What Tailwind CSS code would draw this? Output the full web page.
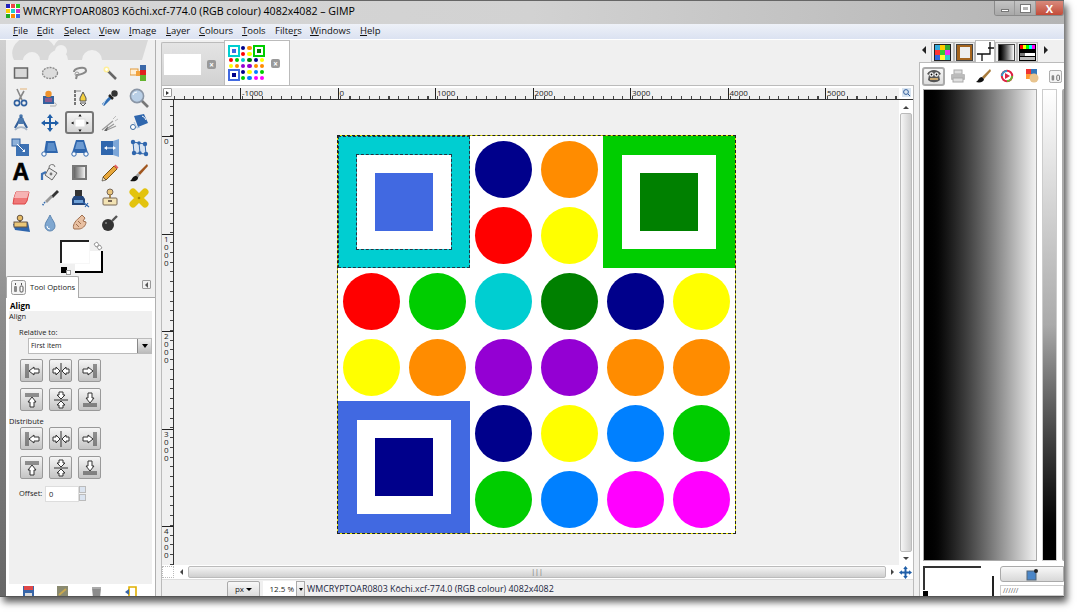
<!DOCTYPE html>
<html>
<head>
<meta charset="utf-8">
<title>GIMP</title>
<script src="https://cdn.jsdelivr.net/npm/@tailwindcss/browser@4"></script>
</head>
<body class="bg-white">
<div class="w-[1080px] h-[615px] overflow-hidden bg-white font-['Open_Sans','Noto_Sans',sans-serif] text-[#222]">
<div class="w-[1064px] h-[597px] flex flex-col overflow-hidden border-b border-[#555] shadow-[3px_5px_7px_rgba(0,0,0,0.65)]">

  <!-- title bar -->
  <div class="h-[24px] flex items-start shrink-0 border-t border-[#666] bg-linear-to-r from-[#d6d6d6] via-[#d2d2d2] to-[#b4b4b4]">
    <svg class="w-[14px] h-[14px] ml-[6px] mt-[3px] shrink-0" viewBox="0 0 14 14"><rect width="14" height="14" fill="#fff"/><rect width="4" height="4" fill="#22b"/><rect x="5" width="4" height="4" fill="#e44"/><rect x="10" width="4" height="4" fill="#2c2"/><rect y="5" width="4" height="4" fill="#fc0"/><rect x="5" y="5" width="4" height="4" fill="#2cc"/><rect x="10" y="5" width="4" height="4" fill="#c3c"/><rect y="10" width="4" height="4" fill="#2a2"/><rect x="5" y="10" width="4" height="4" fill="#f80"/><rect x="10" y="10" width="4" height="4" fill="#36e"/></svg>
    <span class="ml-[3px] mt-[2px] text-[10.6px] leading-[16px] text-black whitespace-nowrap">WMCRYPTOAR0803 Kōchi.xcf-774.0 (RGB colour) 4082x4082 – GIMP</span>
    <div class="ml-auto flex h-[15px] border border-t-0 border-[#8a8a8a] rounded-b-[3px] overflow-hidden">
      <div class="w-[20px] border-r border-[#999] bg-linear-to-b from-[#c4c4c4] to-[#a8a8a8] flex items-center justify-center"><span class="block w-[8px] h-[3px] mt-[4px] bg-white border border-[#777]"></span></div>
      <div class="w-[21px] border-r border-[#999] bg-linear-to-b from-[#c4c4c4] to-[#a8a8a8] flex items-center justify-center"><span class="block w-[9px] h-[7px] border-2 border-white outline outline-[#777]"></span></div>
      <div class="w-[27px] bg-linear-to-b from-[#d88a7c] to-[#c24a38] flex items-center justify-center text-white font-bold text-[11px] leading-none">X</div>
    </div>
  </div>

  <!-- menu bar -->
  <div class="h-[16px] shrink-0 flex items-center pl-[13px] bg-linear-to-b from-[#eef1f8] to-[#dbe2f1] text-[9.5px] text-[#111] border-b border-white">
    <span class="w-[24px]"><u>F</u>ile</span>
    <span class="w-[27px]"><u>E</u>dit</span>
    <span class="w-[35px]"><u>S</u>elect</span>
    <span class="w-[30px]"><u>V</u>iew</span>
    <span class="w-[37px]"><u>I</u>mage</span>
    <span class="w-[33px]"><u>L</u>ayer</span>
    <span class="w-[43px]"><u>C</u>olours</span>
    <span class="w-[33px]"><u>T</u>ools</span>
    <span class="w-[35px]">Filte<u>r</u>s</span>
    <span class="w-[50px]"><u>W</u>indows</span>
    <span><u>H</u>elp</span>
  </div>

  <div class="flex flex-1 min-h-0 bg-[#f0f0f0]">
    <!-- left frame -->
    <div class="w-[6px] shrink-0 bg-linear-to-b from-[#d0d0d0] via-[#8c8c8c] to-[#666]"></div>

    <!-- toolbox + tool options -->
    <div class="w-[150px] shrink-0 flex flex-col border-r border-[#b0b0b0]">
      <svg class="h-[20px] w-[149px] shrink-0" viewBox="0 0 149 20"><g fill="#d9d9d9"><path d="M8 20a20 16 0 0 1 40 -14a14 12 0 0 1 22 -6h72l-6 20h-40a10 10 0 0 0-20 0h-14a10 10 0 0 0-20 0h-8a8 8 0 0 0-16 0z"/></g><circle cx="55" cy="11" r="6" fill="#f0f0f0"/><circle cx="23" cy="20" r="6" fill="#f0f0f0"/></svg>

      <div class="grid grid-cols-5 auto-rows-[25px] w-[148px] h-[175px] shrink-0 place-items-center">
        <!-- row 1 -->
        <svg class="w-[18px] h-[18px]" viewBox="0 0 18 18"><rect x="2.5" y="4" width="13" height="10" fill="#d8d8d8" stroke="#666" stroke-width="1.5"/></svg>
        <svg class="w-[18px] h-[18px]" viewBox="0 0 18 18"><ellipse cx="9" cy="9" rx="7.5" ry="5.5" fill="#dcdcdc" stroke="#888" stroke-width="1.3" stroke-dasharray="2 1"/></svg>
        <svg class="w-[18px] h-[18px]" viewBox="0 0 18 18"><path d="M3 8c0-4 11-6 12-2 1 3-7 5-9 5l-1 4" fill="none" stroke="#888" stroke-width="2"/><circle cx="6" cy="10" r="2" fill="none" stroke="#999"/></svg>
        <svg class="w-[18px] h-[18px]" viewBox="0 0 18 18"><path d="M7 7l8 8" stroke="#666" stroke-width="2.5"/><circle cx="5.5" cy="5.5" r="3" fill="#ffef99"/><circle cx="5.5" cy="5.5" r="1.4" fill="#fff"/></svg>
        <svg class="w-[18px] h-[18px]" viewBox="0 0 18 18"><rect x="0" y="5" width="8" height="6" fill="#fff0d8" stroke="#e19a3a"/><rect x="10" y="1" width="6" height="5" fill="#3c68a8"/><rect x="10" y="6" width="6" height="5" fill="#e02020"/><rect x="10" y="11" width="6" height="6" fill="#63b32e"/><rect x="6" y="7" width="4" height="5" fill="#f2a23c"/></svg>
        <!-- row 2 -->
        <svg class="w-[20px] h-[20px]" viewBox="0 0 20 20"><path d="M6 1l5 11M13 3l-5 9" stroke="#888" stroke-width="1.6"/><path d="M9 1h7" stroke="#e8c9a0" stroke-width="1.5"/><circle cx="6" cy="15" r="2.6" fill="none" stroke="#2f5f9e" stroke-width="1.6"/><circle cx="13" cy="15" r="2.6" fill="none" stroke="#2f5f9e" stroke-width="1.6"/></svg>
        <svg class="w-[20px] h-[20px]" viewBox="0 0 20 20"><path d="M12 15c5-1 5 3 3 3h-5" fill="none" stroke="#aaa"/><rect x="3" y="8" width="11" height="8" fill="#35619e"/><path d="M5 10h7v4h-7z" fill="#8b5a8f"/><circle cx="8.5" cy="6" r="3.2" fill="#f0932b"/></svg>
        <svg class="w-[20px] h-[20px]" viewBox="0 0 20 20"><path d="M5 2v16" stroke="#777" stroke-width="2" stroke-dasharray="3 1"/><path d="M5 3h6" stroke="#888"/><path d="M13 4l3 6v3h-6v-3z" fill="#f4d03f" stroke="#555"/><path d="M10 15l3 3 3-3z" fill="#fff" stroke="#555"/></svg>
        <svg class="w-[20px] h-[20px]" viewBox="0 0 20 20"><path d="M3 17l8-8" stroke="#2f6eb5" stroke-width="3"/><path d="M3 17l3-6" stroke="#cfe2f5"/><path d="M9 7l4 4" stroke="#222" stroke-width="2.5"/><circle cx="14.5" cy="5.5" r="3.2" fill="#333"/></svg>
        <svg class="w-[22px] h-[22px]" viewBox="0 0 22 22"><path d="M13 13l7 7" stroke="#777" stroke-width="2.6"/><circle cx="9" cy="9" r="6.6" fill="#b9cfe6" stroke="#8a96a6" stroke-width="1.6"/><path d="M5 8a4 4 0 0 1 4-3" stroke="#fff" fill="none"/></svg>
        <!-- row 3 -->
        <svg class="w-[20px] h-[20px]" viewBox="0 0 20 20"><circle cx="10" cy="3" r="1.8" fill="#4a78ad"/><path d="M10 4L4 15M10 4l6 11" stroke="#34609a" stroke-width="2.2"/><path d="M4 17a7 6 0 0 1 12 0" fill="none" stroke="#a8b7c8" stroke-width="1.6"/><rect x="7.5" y="5" width="5" height="6" fill="#4a78ad"/></svg>
        <svg class="w-[20px] h-[20px]" viewBox="0 0 20 20"><path d="M10 1l3 4h-2v4h4V7l4 3-4 3v-2h-4v4h2l-3 4-3-4h2v-4H5v2l-4-3 4-3v2h4V5H7z" fill="#1f5ea8"/></svg>
        <div class="w-[29px] h-[23px] border-2 border-[#777] rounded-[3px] bg-linear-to-b from-[#f4f4f4] to-[#d4d4d4] flex items-center justify-center">
          <svg class="w-[22px] h-[18px]" viewBox="0 0 22 18"><rect x="6" y="5" width="10" height="8" fill="#fff" stroke="#ddd"/><path d="M11 0l1.6 2.6h-3.2zM11 18l1.6-2.6h-3.2zM2 9l2.6-1.6v3.2zM20 9l-2.6-1.6v3.2z" fill="#111"/></svg>
        </div>
        <svg class="w-[20px] h-[20px]" viewBox="0 0 20 20"><path d="M2 17l11-9M5 17l9-6M7 17l9-4" stroke="#999" stroke-width="1.2" fill="none"/><path d="M4 18l4-5-1 5z" fill="#666"/><path d="M13 6l3-3M15 8l3-2" stroke="#bbb"/></svg>
        <svg class="w-[20px] h-[20px]" viewBox="0 0 20 20"><path d="M5 3l10-2 4 9-10 4z" fill="#2f66ad"/><path d="M13 3a6 6 0 0 1 4 4" stroke="#fff" fill="none"/><circle cx="4" cy="14" r="2.5" fill="#fff" stroke="#36689f"/><path d="M5 9l3 6 3-1" stroke="#a8c4e3" fill="none"/></svg>
        <!-- row 4 -->
        <svg class="w-[20px] h-[20px]" viewBox="0 0 20 20"><rect x="5" y="6" width="13" height="12" fill="#3d72b4"/><rect x="1" y="1" width="8" height="7" fill="#8eb1d9" stroke="#2f5f9e"/><path d="M6 6l8 8" stroke="#fff"/><path d="M14 14l-3 0 3-3z" fill="#fff"/></svg>
        <svg class="w-[20px] h-[20px]" viewBox="0 0 20 20"><path d="M6 3h9l3 12H4z" fill="#2f66ad"/><path d="M8 5h6l2 8H7z" fill="#5d8fca"/><circle cx="4" cy="16" r="2.2" fill="#fff" stroke="#2f66ad"/></svg>
        <svg class="w-[20px] h-[20px]" viewBox="0 0 20 20"><path d="M6 2h8l4 13H2z" fill="#2f66ad"/><path d="M7 4h6l2 7H5z" fill="#6d9bd2"/><circle cx="4" cy="16" r="2.2" fill="#fff" stroke="#2f66ad"/><circle cx="16" cy="16" r="2.2" fill="#fff" stroke="#2f66ad"/></svg>
        <svg class="w-[20px] h-[20px]" viewBox="0 0 20 20"><path d="M1 3h12v14H1z" fill="#2f66ad"/><path d="M13 3l6-2v18l-6-2z" fill="#7ca6d8"/><path d="M4 10l3-2v4zM16 10l-3-2v4z" fill="#fff"/><path d="M7 10h6" stroke="#fff"/></svg>
        <svg class="w-[20px] h-[20px]" viewBox="0 0 20 20"><path d="M4 4l12 2 1 10-12-1z" fill="#d7e3f1" stroke="#2f66ad"/><path d="M10 5l1 10" stroke="#2f66ad"/><g fill="#2f66ad"><circle cx="4" cy="4" r="2.2"/><circle cx="16" cy="6" r="2.2"/><circle cx="17" cy="16" r="2.2"/><circle cx="5" cy="15" r="2.2"/><circle cx="10" cy="5" r="1.8"/><circle cx="11" cy="15" r="1.8"/></g></svg>
        <!-- row 5 -->
        <div class="text-[23px] leading-none font-bold text-black font-['Liberation_Sans',sans-serif] [-webkit-text-stroke:0.6px_black]">A</div>
        <svg class="w-[20px] h-[20px]" viewBox="0 0 20 20"><path d="M9 5l8 5-5 7-7-5z" fill="#e8e8e8" stroke="#666"/><path d="M9 5a3 3 0 0 1 6-1" fill="none" stroke="#777"/><path d="M6 9L2 11v6" fill="none" stroke="#3e72b4" stroke-width="2.2"/><circle cx="11" cy="11" r="1.4" fill="#777"/></svg>
        <div class="w-[15px] h-[15px] border-2 border-[#777] bg-linear-to-r from-[#666] to-[#f4f4f4]"></div>
        <svg class="w-[20px] h-[20px]" viewBox="0 0 20 20"><path d="M3 14L14 3l3 3L6 17z" fill="#e8a73b" stroke="#7a5412"/><path d="M14 3l1.5-1.5 3 3L17 6z" fill="#e26060"/><path d="M3 14l-1 4 4-1z" fill="#f5dcae" stroke="#333" stroke-width=".6"/></svg>
        <svg class="w-[20px] h-[20px]" viewBox="0 0 20 20"><path d="M18 1L9 10l2 2 8-9z" fill="#a0561f"/><path d="M9 10l2 2-2 3-3-2z" fill="#999"/><path d="M6 13c3 0 4 2 2 4s-5 1-7 1c2-1 2-4 5-5z" fill="#111"/></svg>
        <!-- row 6 -->
        <svg class="w-[20px] h-[20px]" viewBox="0 0 20 20"><path d="M5 4h13l-2 9-2 3H2l1-6z" fill="#ef7777" stroke="#d44"/><path d="M5 4l-2 6h13l2-6z" fill="#f6b3b3"/></svg>
        <svg class="w-[20px] h-[20px]" viewBox="0 0 20 20"><path d="M17 2l-6 6 2 2 6-6z" fill="#333"/><path d="M5 13l6-6 2 2-6 6z" fill="#999"/><path d="M5 14l-3 4" stroke="#3a70b0" stroke-width="1.6" stroke-dasharray="1.5 1"/></svg>
        <svg class="w-[20px] h-[20px]" viewBox="0 0 20 20"><path d="M4 8h9l2 3v6H2v-6z" fill="#23467c"/><rect x="5" y="2" width="7" height="6" fill="#333"/><path d="M4 12h9v3H4z" fill="#6ea0d6"/><path d="M13 14l6 5M15 19l3-4" stroke="#2f66ad" stroke-width="1.2"/></svg>
        <svg class="w-[20px] h-[20px]" viewBox="0 0 20 20"><circle cx="10" cy="4" r="3" fill="#e9c57c" stroke="#765"/><path d="M9 7h2v3H9z" fill="#aa8a4a"/><rect x="3" y="10" width="14" height="7" rx="1" fill="#f3e3b4" stroke="#765"/><rect x="8" y="12" width="4" height="2" fill="#765"/></svg>
        <svg class="w-[20px] h-[20px]" viewBox="0 0 20 20"><path d="M4 4l12 12M16 4L4 16" stroke="#e3c30e" stroke-width="7" stroke-linecap="round"/><circle cx="10" cy="10" r="1.3" fill="#a88c00"/></svg>
        <!-- row 7 -->
        <svg class="w-[20px] h-[20px]" viewBox="0 0 20 20"><path d="M2 11l15-2 2 10-15-2z" fill="#2f66ad"/><rect x="3" y="9" width="13" height="5" fill="#eac779" stroke="#654"/><circle cx="9" cy="5" r="2.8" fill="#e6bb65" stroke="#654"/><path d="M8 7h2v2H8z" fill="#654"/></svg>
        <svg class="w-[18px] h-[18px]" viewBox="0 0 18 18"><path d="M9 1c2 5 5 7 5 11a5 5 0 0 1-10 0c0-4 3-6 5-11z" fill="#7fa7d0" stroke="#5f87b2"/><path d="M6 12a3 3 0 0 0 3 3" stroke="#fff" fill="none"/></svg>
        <svg class="w-[20px] h-[20px]" viewBox="0 0 20 20"><path d="M4 16c-2-3 1-8 5-11l3-3 3 3-2 3 3 1c0 4-4 7-7 7z" fill="#e8c0a2" stroke="#a07050"/><path d="M8 8l3 3M6 11l3 3" stroke="#a07050"/></svg>
        <svg class="w-[20px] h-[20px]" viewBox="0 0 20 20"><circle cx="8" cy="12" r="6" fill="#333"/><path d="M12 8l5-5" stroke="#555" stroke-width="2.4"/><circle cx="6" cy="10" r="1" fill="#888"/></svg>
        <span></span>
      </div>

      <!-- fg / bg colours -->
      <div class="h-[40px] pt-[5px] pl-[54px] shrink-0">
        <div class="relative w-[43px] h-[33px] bg-[#f0f0f0]">
          <div class="absolute right-0 bottom-0 w-[28px] h-[22px] bg-white border-r-2 border-b-2 border-black"></div>
          <div class="absolute left-0 top-0 w-[29px] h-[23px] bg-white border-t-2 border-l-2 border-[#222] shadow-[1px_1px_0_#f7f7f7]"></div>
          <div class="absolute left-[1px] bottom-0 w-[6px] h-[6px] bg-black"></div>
          <div class="absolute left-[6px] bottom-[-2px] w-[5px] h-[5px] bg-white border border-[#999]"></div>
          <svg class="absolute right-0 top-0 w-[11px] h-[11px]" viewBox="0 0 11 11"><path d="M2 4l3-2 2 3-3 2zM5 7l3-2 2 3-3 2z" fill="#fff" stroke="#999"/></svg>
        </div>
      </div>

      <!-- tool options tab -->
      <div class="h-[22px] shrink-0 flex items-end">
        <div class="w-[73px] h-[22px] bg-white border border-b-0 border-[#aaa] flex items-center pl-[4px] gap-[4px] rounded-t-[2px] -mb-px relative z-10">
          <svg class="w-[15px] h-[15px]" viewBox="0 0 15 15"><rect x=".5" y=".5" width="14" height="14" rx="2" fill="#f4f4f4" stroke="#999"/><path d="M4.5 3v2M10.5 3v2" stroke="#555"/><rect x="3" y="6" width="3" height="6" rx="1" fill="#888"/><rect x="9" y="6" width="3" height="6" rx="1" fill="#fff" stroke="#555"/></svg>
          <span class="text-[7.6px] leading-none whitespace-nowrap">Tool Options</span>
        </div>
        <div class="ml-auto mr-[4px] mb-[8px] w-[9px] h-[9px] border border-[#999] rounded-[1px] flex items-center justify-center"><span class="block border-y-[3px] border-r-[3px] border-y-transparent border-r-[#555]"></span></div>
      </div>

      <!-- tool options panel -->
      <div class="flex-1 min-h-0 bg-white border-t border-[#aaa] pt-[3px] pl-[3px] pr-[3px] flex flex-col">
        <div class="text-[8px] leading-[10px] font-bold text-black pl-[1px]">Align</div>
        <div class="flex-1 bg-[#f0f0f0] text-[7.5px] flex flex-col">
          <div class="leading-[10px]">Align</div>
          <div class="leading-[10px] pl-[10px] mt-[6px]">Relative to:</div>
          <div class="ml-[19px] mt-[1px] w-[124px] h-[16px] bg-white border border-[#bbb] flex items-center pl-[2px] justify-between text-[7px]">
            <span>First item</span>
            <span class="w-[14px] h-[14px] border-l border-[#888] bg-linear-to-b from-[#eee] to-[#bbb] flex items-center justify-center"><span class="block border-x-[3px] border-t-[4px] border-x-transparent border-t-black"></span></span>
          </div>
          <div class="grid grid-cols-[23px_23px_23px] gap-x-[6px] gap-y-[6px] ml-[11px] mt-[5px]">
            <button class="h-[23px] rounded-[2px] border border-[#999] bg-linear-to-b from-[#f5f5f5] to-[#c4c4c4] flex items-center justify-center"><svg class="w-[18px] h-[18px]" viewBox="0 0 18 18"><path d="M3 2v14M5 2v14" stroke="#333"/><path d="M6 9l5-4v2h5v4h-5v2z" fill="#fff" stroke="#333"/></svg></button>
            <button class="h-[23px] rounded-[2px] border border-[#999] bg-linear-to-b from-[#f5f5f5] to-[#c4c4c4] flex items-center justify-center"><svg class="w-[18px] h-[18px]" viewBox="0 0 18 18"><path d="M9 1v16" stroke="#333"/><path d="M8 9L4 5v2H1v4h3v2zM10 9l4-4v2h3v4h-3v2z" fill="#fff" stroke="#333"/></svg></button>
            <button class="h-[23px] rounded-[2px] border border-[#999] bg-linear-to-b from-[#f5f5f5] to-[#c4c4c4] flex items-center justify-center"><svg class="w-[18px] h-[18px]" viewBox="0 0 18 18"><path d="M15 2v14M13 2v14" stroke="#333"/><path d="M12 9L7 5v2H2v4h5v2z" fill="#fff" stroke="#333"/></svg></button>
            <button class="h-[23px] rounded-[2px] border border-[#999] bg-linear-to-b from-[#f5f5f5] to-[#c4c4c4] flex items-center justify-center"><svg class="w-[18px] h-[18px]" viewBox="0 0 18 18"><path d="M2 3h14M2 5h14" stroke="#333"/><path d="M9 6l4 5h-2v5H7v-5H5z" fill="#fff" stroke="#333"/></svg></button>
            <button class="h-[23px] rounded-[2px] border border-[#999] bg-linear-to-b from-[#f5f5f5] to-[#c4c4c4] flex items-center justify-center"><svg class="w-[18px] h-[18px]" viewBox="0 0 18 18"><path d="M2 9h14" stroke="#333"/><path d="M9 8L5 4h2V1h4v3h2zM9 10l-4 4h2v3h4v-3h2z" fill="#fff" stroke="#333"/></svg></button>
            <button class="h-[23px] rounded-[2px] border border-[#999] bg-linear-to-b from-[#f5f5f5] to-[#c4c4c4] flex items-center justify-center"><svg class="w-[18px] h-[18px]" viewBox="0 0 18 18"><path d="M2 15h14M2 13h14" stroke="#333"/><path d="M9 12L5 7h2V2h4v5h2z" fill="#fff" stroke="#333"/></svg></button>
          </div>
          <div class="leading-[10px] mt-[5px]">Distribute</div>
          <div class="grid grid-cols-[23px_23px_23px] gap-x-[6px] gap-y-[6px] ml-[11px] mt-[1px]">
            <button class="h-[23px] rounded-[2px] border border-[#999] bg-linear-to-b from-[#f5f5f5] to-[#c4c4c4] flex items-center justify-center"><svg class="w-[18px] h-[18px]" viewBox="0 0 18 18"><path d="M3 2v14M5 2v14" stroke="#333"/><path d="M6 9l5-4v2h5v4h-5v2z" fill="#fff" stroke="#333"/></svg></button>
            <button class="h-[23px] rounded-[2px] border border-[#999] bg-linear-to-b from-[#f5f5f5] to-[#c4c4c4] flex items-center justify-center"><svg class="w-[18px] h-[18px]" viewBox="0 0 18 18"><path d="M9 1v16" stroke="#333"/><path d="M8 9L4 5v2H1v4h3v2zM10 9l4-4v2h3v4h-3v2z" fill="#fff" stroke="#333"/></svg></button>
            <button class="h-[23px] rounded-[2px] border border-[#999] bg-linear-to-b from-[#f5f5f5] to-[#c4c4c4] flex items-center justify-center"><svg class="w-[18px] h-[18px]" viewBox="0 0 18 18"><path d="M15 2v14M13 2v14" stroke="#333"/><path d="M12 9L7 5v2H2v4h5v2z" fill="#fff" stroke="#333"/></svg></button>
            <button class="h-[23px] rounded-[2px] border border-[#999] bg-linear-to-b from-[#f5f5f5] to-[#c4c4c4] flex items-center justify-center"><svg class="w-[18px] h-[18px]" viewBox="0 0 18 18"><path d="M2 3h14M2 5h14" stroke="#333"/><path d="M9 6l4 5h-2v5H7v-5H5z" fill="#fff" stroke="#333"/></svg></button>
            <button class="h-[23px] rounded-[2px] border border-[#999] bg-linear-to-b from-[#f5f5f5] to-[#c4c4c4] flex items-center justify-center"><svg class="w-[18px] h-[18px]" viewBox="0 0 18 18"><path d="M2 9h14" stroke="#333"/><path d="M9 8L5 4h2V1h4v3h2zM9 10l-4 4h2v3h4v-3h2z" fill="#fff" stroke="#333"/></svg></button>
            <button class="h-[23px] rounded-[2px] border border-[#999] bg-linear-to-b from-[#f5f5f5] to-[#c4c4c4] flex items-center justify-center"><svg class="w-[18px] h-[18px]" viewBox="0 0 18 18"><path d="M2 15h14M2 13h14" stroke="#333"/><path d="M9 12L5 7h2V2h4v5h2z" fill="#fff" stroke="#333"/></svg></button>
          </div>
          <div class="flex items-center mt-[7px] pl-[10px]">
            <span class="w-[26px]">Offset:</span>
            <span class="w-[34px] h-[16px] bg-white border border-[#ddd] pl-[3px] leading-[14px]">0</span>
            <span class="w-[7px] h-[16px] flex flex-col gap-px"><span class="h-[7px] bg-[#dbe4f0] border border-[#bbb]"></span><span class="h-[7px] bg-[#dbe4f0] border border-[#bbb]"></span></span>
          </div>
        </div>
        <div class="h-[12px] shrink-0 flex justify-between px-[14px] pt-[2px] pr-[15px] overflow-hidden">
          <svg class="w-[11px] h-[12px] shrink-0" viewBox="0 0 11 12"><rect width="11" height="12" fill="#3866a8"/><rect x="1" y="0" width="9" height="4" fill="#e04848"/><rect x="2" y="7" width="7" height="5" fill="#ddd"/></svg>
          <svg class="w-[11px] h-[12px] shrink-0" viewBox="0 0 11 12"><rect width="11" height="12" fill="#8a8a70"/><path d="M2 9l7-6" stroke="#c8a850" stroke-width="2"/></svg>
          <svg class="w-[11px] h-[12px] shrink-0" viewBox="0 0 11 12"><path d="M1 2h9l-1 10H2z" fill="#8c8c8c"/><rect x="1" y="1" width="9" height="2" fill="#aaa"/></svg>
          <svg class="w-[12px] h-[12px] shrink-0" viewBox="0 0 12 12"><path d="M4 1h7v11H4z" fill="#fff" stroke="#e0b000" stroke-width="1.6"/><path d="M0 6l4-3v6z" fill="#3866a8"/></svg>
        </div>
      </div>
    </div>

    <!-- image column -->
    <div class="w-[753px] ml-[5px] shrink-0 flex flex-col">
      <!-- tabs -->
      <div class="h-[45px] shrink-0 flex items-end">
        <div class="w-[63px] h-[43px] bg-linear-to-b from-[#e4e4e4] to-[#d2d2d2] border-t border-l border-[#bbb] rounded-tl-[2px] flex items-center pl-[2px] gap-[6px]">
          <div class="w-[37px] h-[21px] bg-white"></div>
          <div class="w-[9px] h-[9px] rounded-[2px] bg-[#999] text-white text-[8px] leading-[9px] text-center font-bold">×</div>
        </div>
        <div class="w-[66px] h-[45px] bg-white border-t border-x border-[#bbb] flex items-center pl-[3px] gap-[6px]">
          <div class="w-[37px] h-[37px] grid grid-cols-6 grid-rows-6 shrink-0">
            <div class="col-span-2 row-span-2 border-[2px] border-[#00ced1] p-[2px]"><div class="h-full bg-[#4169e1]"></div></div>
            <span class="m-px rounded-full bg-[#00008b]"></span><span class="m-px rounded-full bg-[#ff8c00]"></span>
            <div class="col-span-2 row-span-2 border-[2px] border-[#00cd00] p-[2px]"><div class="h-full bg-[#008000]"></div></div>
            <span class="m-px rounded-full bg-[#ff0000]"></span><span class="m-px rounded-full bg-[#ffff00]"></span>
            <span class="m-px rounded-full bg-[#ff0000]"></span><span class="m-px rounded-full bg-[#00cd00]"></span><span class="m-px rounded-full bg-[#00ced1]"></span><span class="m-px rounded-full bg-[#008000]"></span><span class="m-px rounded-full bg-[#00008b]"></span><span class="m-px rounded-full bg-[#ffff00]"></span>
            <span class="m-px rounded-full bg-[#ffff00]"></span><span class="m-px rounded-full bg-[#ff8c00]"></span><span class="m-px rounded-full bg-[#9400d3]"></span><span class="m-px rounded-full bg-[#9400d3]"></span><span class="m-px rounded-full bg-[#ff8c00]"></span><span class="m-px rounded-full bg-[#ff8c00]"></span>
            <div class="col-span-2 row-span-2 border-[2px] border-[#4169e1] p-[2px]"><div class="h-full bg-[#00008b]"></div></div>
            <span class="m-px rounded-full bg-[#00008b]"></span><span class="m-px rounded-full bg-[#ffff00]"></span><span class="m-px rounded-full bg-[#0080ff]"></span><span class="m-px rounded-full bg-[#00cd00]"></span>
            <span class="m-px rounded-full bg-[#00cd00]"></span><span class="m-px rounded-full bg-[#0080ff]"></span><span class="m-px rounded-full bg-[#ff00ff]"></span><span class="m-px rounded-full bg-[#ff00ff]"></span>
          </div>
          <div class="w-[9px] h-[9px] rounded-[2px] bg-[#999] text-white text-[8px] leading-[9px] text-center font-bold">×</div>
        </div>
      </div>

      <!-- image panel -->
      <div class="flex-1 min-h-0 bg-white border-x border-t border-[#bbb] flex flex-col pt-[2px]">
        <!-- top ruler -->
        <div class="h-[12px] shrink-0 flex bg-[#f0f0f0] border-b border-[#333]">
          <div class="w-[12px] pl-[1px] shrink-0"><div class="w-[9px] h-[9px] bg-white border border-[#999] rounded-[1px] flex items-center justify-center"><span class="block border-y-[2.5px] border-l-[3px] border-y-transparent border-l-[#333]"></span></div></div>
          <div class="flex-1 flex pl-[66px] bg-[repeating-linear-gradient(90deg,#444_0,#444_1px,transparent_1px,transparent_9.75px)] bg-[length:100%_3px] bg-bottom bg-no-repeat text-[8px] leading-[10px] text-[#222] overflow-hidden">
            <span class="w-[97.5px] shrink-0 border-l border-[#222] pl-[1px]">-1000</span>
            <span class="w-[97.5px] shrink-0 border-l border-[#222] pl-[1px]">0</span>
            <span class="w-[97.5px] shrink-0 border-l border-[#222] pl-[1px]">1000</span>
            <span class="w-[97.5px] shrink-0 border-l border-[#222] pl-[1px]">2000</span>
            <span class="w-[97.5px] shrink-0 border-l border-[#222] pl-[1px]">3000</span>
            <span class="w-[97.5px] shrink-0 border-l border-[#222] pl-[1px]">4000</span>
            <span class="w-[60px] shrink-0 border-l border-[#222] pl-[1px]">5000</span>
          </div>
          <div class="w-[14px] shrink-0 bg-white flex items-start justify-center"><svg class="w-[9px] h-[9px]" viewBox="0 0 9 9"><rect width="9" height="9" fill="#d8e4f0"/><circle cx="4" cy="4" r="2.4" fill="none" stroke="#35619e"/><path d="M6 6l2 2" stroke="#35619e"/></svg></div>
        </div>

        <div class="flex-1 min-h-0 flex">
          <!-- left ruler -->
          <div class="w-[12px] shrink-0 bg-[#f0f0f0] border-r border-[#333] pt-[36px] bg-[repeating-linear-gradient(0deg,#444_0,#444_1px,transparent_1px,transparent_9.75px)] bg-[length:3px_100%] bg-right bg-no-repeat text-[8px] leading-[8px] overflow-hidden">
            <div class="h-[97.5px] border-t border-[#222] pl-[2px]"><span class="block w-[6px] break-all">0</span></div>
            <div class="h-[97.5px] border-t border-[#222] pl-[2px]"><span class="block w-[6px] break-all">1000</span></div>
            <div class="h-[97.5px] border-t border-[#222] pl-[2px]"><span class="block w-[6px] break-all">2000</span></div>
            <div class="h-[97.5px] border-t border-[#222] pl-[2px]"><span class="block w-[6px] break-all">3000</span></div>
            <div class="h-[38px] border-t border-[#222] pl-[2px]"><span class="block w-[6px] break-all">4000</span></div>
          </div>

          <!-- canvas -->
          <div class="flex-1 bg-[#f0f0f0] flex justify-center pt-[36px] overflow-hidden">
            <div class="w-[397px] h-[397px] bg-white grid grid-cols-6 grid-rows-6 shrink-0 shadow-[0_0_0_1px_#e8e800] outline-1 outline-dashed outline-[#222]">
              <div class="col-span-2 row-span-2 bg-[#00ced1] p-[19px] outline-1 outline-dashed outline-[#234] -outline-offset-1"><div class="h-full bg-white p-[18px] outline-1 outline-dashed outline-[#234]"><div class="h-full bg-[#4169e1]"></div></div></div>
              <span class="m-[4.5px] rounded-full bg-[#00008b]"></span><span class="m-[4.5px] rounded-full bg-[#ff8c00]"></span>
              <div class="col-span-2 row-span-2 bg-[#00cd00] p-[19px]"><div class="h-full bg-white p-[18px]"><div class="h-full bg-[#008000]"></div></div></div>
              <span class="m-[4.5px] rounded-full bg-[#ff0000]"></span><span class="m-[4.5px] rounded-full bg-[#ffff00]"></span>
              <span class="m-[4.5px] rounded-full bg-[#ff0000]"></span><span class="m-[4.5px] rounded-full bg-[#00cd00]"></span><span class="m-[4.5px] rounded-full bg-[#00ced1]"></span><span class="m-[4.5px] rounded-full bg-[#008000]"></span><span class="m-[4.5px] rounded-full bg-[#00008b]"></span><span class="m-[4.5px] rounded-full bg-[#ffff00]"></span>
              <span class="m-[4.5px] rounded-full bg-[#ffff00]"></span><span class="m-[4.5px] rounded-full bg-[#ff8c00]"></span><span class="m-[4.5px] rounded-full bg-[#9400d3]"></span><span class="m-[4.5px] rounded-full bg-[#9400d3]"></span><span class="m-[4.5px] rounded-full bg-[#ff8c00]"></span><span class="m-[4.5px] rounded-full bg-[#ff8c00]"></span>
              <div class="col-span-2 row-span-2 bg-[#4169e1] p-[19px]"><div class="h-full bg-white p-[18px]"><div class="h-full bg-[#00008b]"></div></div></div>
              <span class="m-[4.5px] rounded-full bg-[#00008b]"></span><span class="m-[4.5px] rounded-full bg-[#ffff00]"></span><span class="m-[4.5px] rounded-full bg-[#0080ff]"></span><span class="m-[4.5px] rounded-full bg-[#00cd00]"></span>
              <span class="m-[4.5px] rounded-full bg-[#00cd00]"></span><span class="m-[4.5px] rounded-full bg-[#0080ff]"></span><span class="m-[4.5px] rounded-full bg-[#ff00ff]"></span><span class="m-[4.5px] rounded-full bg-[#ff00ff]"></span>
            </div>
          </div>

          <!-- vertical scrollbar -->
          <div class="w-[14px] shrink-0 bg-white flex flex-col items-center">
            <span class="block mt-[6px] border-x-[3px] border-b-[3px] border-x-transparent border-b-[#444]"></span>
            <div class="w-[12px] flex-1 mt-[4px] mb-[5px] rounded-[2px] border border-[#bbb] bg-linear-to-r from-[#f6f6f6] to-[#cfcfcf]"></div>
            <span class="block mb-[5px] border-x-[3px] border-t-[3px] border-x-transparent border-t-[#444]"></span>
          </div>
        </div>

        <!-- horizontal scrollbar -->
        <div class="h-[14px] shrink-0 flex items-center bg-white">
          <div class="w-[12px] h-[12px] shrink-0 border border-dotted border-[#bbb]"></div>
          <span class="block ml-[6px] border-y-[3px] border-r-[3px] border-y-transparent border-r-[#444]"></span>
          <div class="flex-1 h-[12px] ml-[5px] rounded-[2px] border border-[#bbb] bg-linear-to-b from-[#f4f4f4] to-[#cfcfcf] text-center text-[7px] leading-[9px] text-[#666]">|||</div>
          <span class="block ml-[5px] border-y-[3px] border-l-[3px] border-y-transparent border-l-[#444]"></span>
          <svg class="w-[13px] h-[13px] ml-[5px] mr-[1px] shrink-0" viewBox="0 0 20 20"><path d="M10 0l3.5 4.5H11.5v4h4V6.500l4.500 3.500-4.500 3.500v-2h-4v4h2L10 20l-3.500-4.500h2v-4h-4v2L0 10l4.500-3.500v2h4v-4h-2z" fill="#1f5ea8"/></svg>
        </div>

        <!-- status bar -->
        <div class="h-[17px] shrink-0 border-t border-[#ddd] bg-[#f0f0f0] flex items-start pl-[65px] pt-[1px] text-[8px] overflow-hidden">
          <div class="w-[33px] h-[16px] rounded-t-[2px] border border-[#aaa] bg-linear-to-b from-[#f8f8f8] to-[#ddd] flex items-center justify-center gap-[2px]">px<span class="block border-x-[3px] border-t-[3px] border-x-transparent border-t-black"></span></div>
          <div class="w-[33px] h-[16px] ml-[3px] bg-white text-right pr-[2px] leading-[16px]">12.5 %</div>
          <div class="w-[9px] h-[16px] border border-[#aaa] bg-linear-to-b from-[#f8f8f8] to-[#ddd] flex items-center justify-center"><span class="block border-x-[2.5px] border-t-[3px] border-x-transparent border-t-black"></span></div>
          <span class="ml-[2px] text-[8.9px] leading-[15px] whitespace-nowrap text-[#1a2540]">WMCRYPTOAR0803 Kōchi.xcf-774.0 (RGB colour) 4082x4082</span>
        </div>
      </div>
    </div>

    <!-- right dock -->
    <div class="flex-1 min-w-0 ml-[5px] flex flex-col overflow-hidden">
      <div class="h-[22px] shrink-0 flex items-end">
        <span class="block ml-[3px] mb-[8px] mr-[5px] border-y-[4px] border-r-[4px] border-y-transparent border-r-[#222]"></span>
        <div class="w-[23px] h-[20px] border border-[#bbb] bg-[#eee] flex items-center justify-center">
          <svg class="w-[17px] h-[17px]" viewBox="0 0 17 17"><rect width="17" height="17" fill="#222"/><rect x="1" y="1" width="5" height="5" fill="#3ad"/><rect x="6" y="1" width="5" height="5" fill="#fc0"/><rect x="11" y="1" width="5" height="5" fill="#3a3"/><rect x="1" y="6" width="5" height="5" fill="#f33"/><rect x="6" y="6" width="5" height="5" fill="#3c3"/><rect x="11" y="6" width="5" height="5" fill="#e3e"/><rect x="1" y="11" width="5" height="5" fill="#36d"/><rect x="6" y="11" width="5" height="5" fill="#ff3"/><rect x="11" y="11" width="5" height="5" fill="#3cc"/></svg>
        </div>
        <div class="w-[21px] h-[20px] border border-[#bbb] bg-[#eee] flex items-center justify-center">
          <div class="w-[17px] h-[17px] bg-[#a5651e] border border-[#444] flex items-center justify-center"><div class="w-[10px] h-[11px] bg-[#eee]"></div></div>
        </div>
        <div class="w-[20px] h-[22px] bg-white border-t border-x border-[#bbb]">
          <svg class="w-[18px] h-[20px]" viewBox="0 0 18 20"><path d="M14 1v12H1M12 7h6M6 13v7" stroke="#111" stroke-width="1.3" fill="none"/></svg>
        </div>
        <div class="w-[22px] h-[20px] border border-[#bbb] bg-[#eee] flex items-center justify-center">
          <div class="w-[17px] h-[17px] border border-[#444] bg-linear-to-r from-black to-white"></div>
        </div>
        <div class="w-[21px] h-[20px] border border-[#bbb] bg-[#eee] flex items-center justify-center">
          <svg class="w-[17px] h-[17px]" viewBox="0 0 17 17"><rect width="17" height="17" fill="#000"/><rect x="1" y="1" width="3" height="4" fill="#f00"/><rect x="4" y="1" width="3" height="4" fill="#ff0"/><rect x="7" y="1" width="3" height="4" fill="#0f0"/><rect x="10" y="1" width="3" height="4" fill="#0ff"/><rect x="13" y="1" width="3" height="4" fill="#f0f"/><rect x="1" y="9" width="5" height="3" fill="#777"/><rect x="6" y="9" width="10" height="3" fill="#fff"/><rect x="1" y="13" width="15" height="3" fill="#bbb"/></svg>
        </div>
        <span class="block ml-[6px] mb-[8px] border-y-[4px] border-l-[4px] border-y-transparent border-l-[#222]"></span>
      </div>

      <div class="flex-1 min-h-0 bg-white border-t border-l border-[#bbb] flex flex-col">
        <div class="h-[26px] shrink-0 flex items-center pl-[2px]">
          <div class="w-[23px] h-[19px] rounded-[3px] border-2 border-[#aaa] bg-linear-to-b from-[#f8f8f8] to-[#ddd] flex items-center justify-center mr-[4px]">
            <svg class="w-[16px] h-[14px]" viewBox="0 0 16 14"><path d="M1 5c2-3 4-4 7-4s5 1 7 4l-2 1 1 5c-3 3-9 3-12 0l1-5z" fill="#555"/><circle cx="5.500" cy="5.500" r="2.200" fill="#fff"/><circle cx="10.500" cy="5.500" r="2.200" fill="#fff"/><circle cx="5.500" cy="5.500" r=".9" fill="#000"/><circle cx="10.500" cy="5.500" r=".9" fill="#000"/><rect x="4" y="9" width="8" height="2" fill="#c9a66b"/></svg>
          </div>
          <svg class="w-[16px] h-[14px] ml-[1px] mr-[9px]" viewBox="0 0 16 14"><rect x="4" y="1" width="8" height="4" fill="#ddd" stroke="#aaa"/><rect x="1" y="5" width="14" height="6" rx="1" fill="#bbb"/><rect x="3" y="9" width="10" height="4" fill="#e0e0e0" stroke="#aaa"/></svg>
          <svg class="w-[16px] h-[16px] mr-[9px]" viewBox="0 0 16 16"><path d="M15 1L7 9l2 2 7-8z" fill="#a87b3c"/><path d="M7 9c-3 0-3 3-6 5 4 1 8 0 8-3z" fill="#111"/></svg>
          <svg class="w-[14px] h-[14px] mr-[11px]" viewBox="0 0 14 14"><circle cx="7" cy="7" r="5.200" fill="#fff" stroke="#d24" stroke-width="2"/><path d="M2 7a5 5 0 0 1 5-5" stroke="#39c" stroke-width="2" fill="none"/><path d="M12 7a5 5 0 0 1-5 5" stroke="#6b3" stroke-width="2" fill="none"/><path d="M5 4l5 3-5 3z" fill="#d24"/></svg>
          <svg class="w-[14px] h-[14px] mr-[10px]" viewBox="0 0 14 14"><rect x="1" y="0" width="6" height="6" fill="#e33"/><rect x="6" y="0" width="6" height="6" fill="#37b"/><rect x="1" y="5" width="6" height="5" fill="#f93"/><circle cx="9" cy="9" r="4.500" fill="#e8c48e"/></svg>
          <svg class="w-[13px] h-[13px]" viewBox="0 0 15 15"><rect x=".5" y=".5" width="14" height="14" rx="2" fill="#f4f4f4" stroke="#999"/><rect x="3" y="6" width="3" height="6" rx="1" fill="#888"/><rect x="9" y="6" width="3" height="6" rx="1" fill="#fff" stroke="#555"/></svg>
        </div>
        <div class="flex-1 min-h-0 flex gap-[5px] pl-[3px]">
          <div class="w-[114px] border border-[#aaa] bg-linear-to-r from-black to-[#f2f2f2]"></div>
          <div class="w-[15px] border border-[#ccc] bg-linear-to-b from-white via-[#aaa] to-black"></div>
          <div class="flex-1 border border-[#aaa] rounded-l-[3px] bg-[#f0f0f0]"></div>
        </div>
        <div class="h-[35px] shrink-0 flex pl-[3px] pt-[5px]">
          <div class="relative w-[71px] h-[30px] shrink-0">
            <div class="absolute left-0 top-0 w-[58px] h-[24px] bg-white border-t-2 border-l-2 border-[#333]"></div>
            <div class="absolute right-0 bottom-0 top-[10px] w-[2px] bg-[#222]"></div>
            <div class="absolute left-0 bottom-0 w-[5px] h-[5px] bg-black"></div>
          </div>
          <div class="ml-[6px] flex-1 flex flex-col">
            <div class="h-[17px] rounded-l-[3px] border border-[#aaa] bg-linear-to-b from-[#f8f8f8] to-[#d8d8d8] flex items-center justify-center"><svg class="w-[13px] h-[13px]" viewBox="0 0 13 13"><rect x="1" y="3" width="9" height="9" fill="#4a86c8" stroke="#567"/><circle cx="10" cy="3" r="2" fill="#222"/></svg></div>
            <div class="mt-[3px] flex-1 bg-white border border-[#ccc] pl-[2px] text-[7px] leading-[9px] text-[#555]">//////</div>
          </div>
        </div>
      </div>
    </div>
  </div>
</div>
</div>
</body>
</html>
